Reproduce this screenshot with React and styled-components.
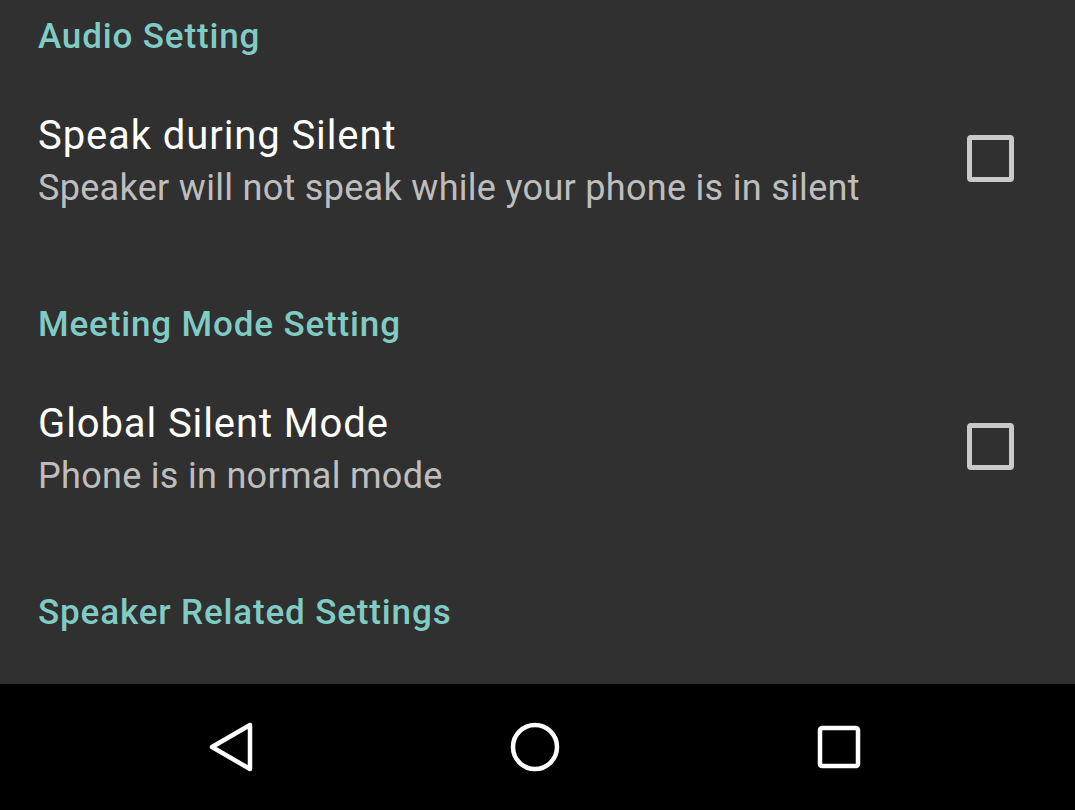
import React from 'react';
import styled, { createGlobalStyle } from 'styled-components';

const GlobalStyle = createGlobalStyle`
  html, body {
    margin: 0;
    padding: 0;
    background: #303030;
  }
  body {
    font-family: Roboto, "Noto Sans", sans-serif;
  }
`;

const Screen = styled.div`
  width: 1075px;
  height: 810px;
  display: flex;
  flex-direction: column;
  background: #303030;
  overflow: hidden;
`;

const Content = styled.div`
  flex: 1;
  display: flex;
  flex-direction: column;
  overflow: hidden;
`;

const Section = styled.div`
  display: flex;
  flex-direction: column;
  padding-bottom: 44px;
`;

const SectionHeader = styled.div`
  height: 72px;
  display: flex;
  align-items: center;
  padding-left: 38px;
  font-size: 35px;
  letter-spacing: 0.85px;
  font-weight: 500;
  color: #80cbc4;
`;

const Row = styled.div`
  height: 172px;
  display: flex;
  align-items: center;
  justify-content: space-between;
  padding: 0 61px 0 38px;
`;

const TextBlock = styled.div`
  display: flex;
  flex-direction: column;
  padding-top: 8px;
`;

const Title = styled.div`
  font-size: 40px;
  letter-spacing: 0.9px;
  line-height: 52px;
  color: #ffffff;
`;

const Summary = styled.div`
  font-size: 36px;
  letter-spacing: 0.3px;
  line-height: 52px;
  color: rgba(255, 255, 255, 0.7);
`;

const CheckBox = styled.div`
  width: 37px;
  height: 37px;
  border: 5px solid #c9c9c9;
  border-radius: 4px;
  box-sizing: content-box;
`;

const NavBar = styled.div`
  height: 126px;
  background: #000;
  display: grid;
  grid-template-columns: repeat(3, 304px);
  justify-content: center;
  align-items: center;
  padding-right: 5px;
`;

const NavButton = styled.div`
  height: 56px;
  display: flex;
  align-items: center;
  justify-content: center;
`;

const sections = [
  {
    header: 'Audio Setting',
    items: [
      {
        title: 'Speak during Silent',
        summary: 'Speaker will not speak while your phone is in silent',
      },
    ],
  },
  {
    header: 'Meeting Mode Setting',
    items: [{ title: 'Global Silent Mode', summary: 'Phone is in normal mode' }],
  },
  { header: 'Speaker Related Settings', items: [] },
];

function BackIcon() {
  return (
    <svg width="50" height="52" viewBox="0 0 50 52">
      <path
        d="M44 4 L44 48 L6 26 Z"
        fill="none"
        stroke="#fff"
        strokeWidth="4.5"
        strokeLinejoin="round"
      />
    </svg>
  );
}

function HomeIcon() {
  return (
    <svg width="52" height="52" viewBox="0 0 52 52">
      <circle cx="26" cy="26" r="22" fill="none" stroke="#fff" strokeWidth="4.5" />
    </svg>
  );
}

function RecentsIcon() {
  return (
    <svg width="46" height="46" viewBox="0 0 46 46">
      <rect
        x="4"
        y="4"
        width="38"
        height="38"
        rx="2"
        fill="none"
        stroke="#fff"
        strokeWidth="4.5"
      />
    </svg>
  );
}

export default function App() {
  return (
    <Screen>
      <GlobalStyle />
      <Content>
        {sections.map((section) => (
          <Section key={section.header}>
            <SectionHeader>{section.header}</SectionHeader>
            {section.items.map((item) => (
              <Row key={item.title}>
                <TextBlock>
                  <Title>{item.title}</Title>
                  <Summary>{item.summary}</Summary>
                </TextBlock>
                <CheckBox />
              </Row>
            ))}
          </Section>
        ))}
      </Content>
      <NavBar>
        <NavButton>
          <BackIcon />
        </NavButton>
        <NavButton>
          <HomeIcon />
        </NavButton>
        <NavButton>
          <RecentsIcon />
        </NavButton>
      </NavBar>
    </Screen>
  );
}
